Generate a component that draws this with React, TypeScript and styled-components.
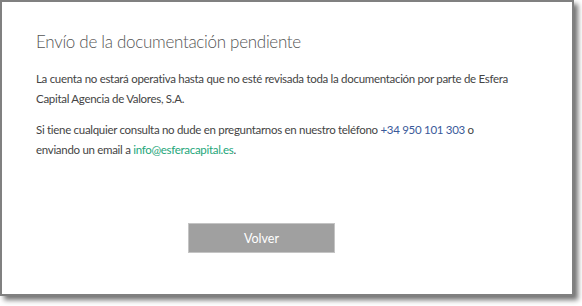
import styled, { createGlobalStyle } from "styled-components";

const GlobalStyle = createGlobalStyle`
  html, body {
    margin: 0;
    padding: 0;
    background: #ffffff;
  }
  body {
    width: 582px;
    height: 306px;
    overflow: hidden;
  }
`;

const Panel = styled.div`
  box-sizing: border-box;
  width: 574px;
  height: 296px;
  background: #ffffff;
  border: 2px solid #808080;
  box-shadow: 4px 4px 5px rgba(0, 0, 0, 0.55);
  padding: 27px 58px 0 34px;
  display: flex;
  flex-direction: column;
  font-family: Lato, "Open Sans", sans-serif;
  color: #444444;
`;

const Title = styled.h1`
  margin: 0 0 14px;
  font-size: 17px;
  font-weight: 300;
  letter-spacing: -0.3px;
  color: #555555;
  line-height: 26px;
`;

const Paragraph = styled.p`
  margin: 0 0 12px;
  font-size: 11.5px;
  letter-spacing: -0.3px;
  line-height: 19.5px;
`;

const Link = styled.a<{ $tone: "blue" | "green" }>`
  color: ${(p) => (p.$tone === "blue" ? "#3a5a9a" : "#24a67a")};
  text-decoration: none;
`;

const Actions = styled.div`
  display: flex;
  padding-left: 152px;
  margin-top: 52px;
`;

const Button = styled.button`
  width: 147px;
  height: 30px;
  background: #a0a0a0;
  border: 1px solid #c4c4c4;
  color: #ffffff;
  font-family: Lato, "Open Sans", sans-serif;
  font-size: 12.5px;
  cursor: pointer;
`;

export default function App() {
  return (
    <>
      <GlobalStyle />
      <Panel>
        <Title>Envío de la documentación pendiente</Title>
        <Paragraph>
          La cuenta no estará operativa hasta que no esté revisada toda la documentación por
          parte de Esfera Capital Agencia de Valores, S.A.
        </Paragraph>
        <Paragraph>
          Si tiene cualquier consulta no dude en preguntarnos en nuestro teléfono{" "}
          <Link $tone="blue" href="#">+34 950 101 303</Link> o enviando un email a{" "}
          <Link $tone="green" href="#">info@esferacapital.es</Link>.
        </Paragraph>
        <Actions>
          <Button>Volver</Button>
        </Actions>
      </Panel>
    </>
  );
}
